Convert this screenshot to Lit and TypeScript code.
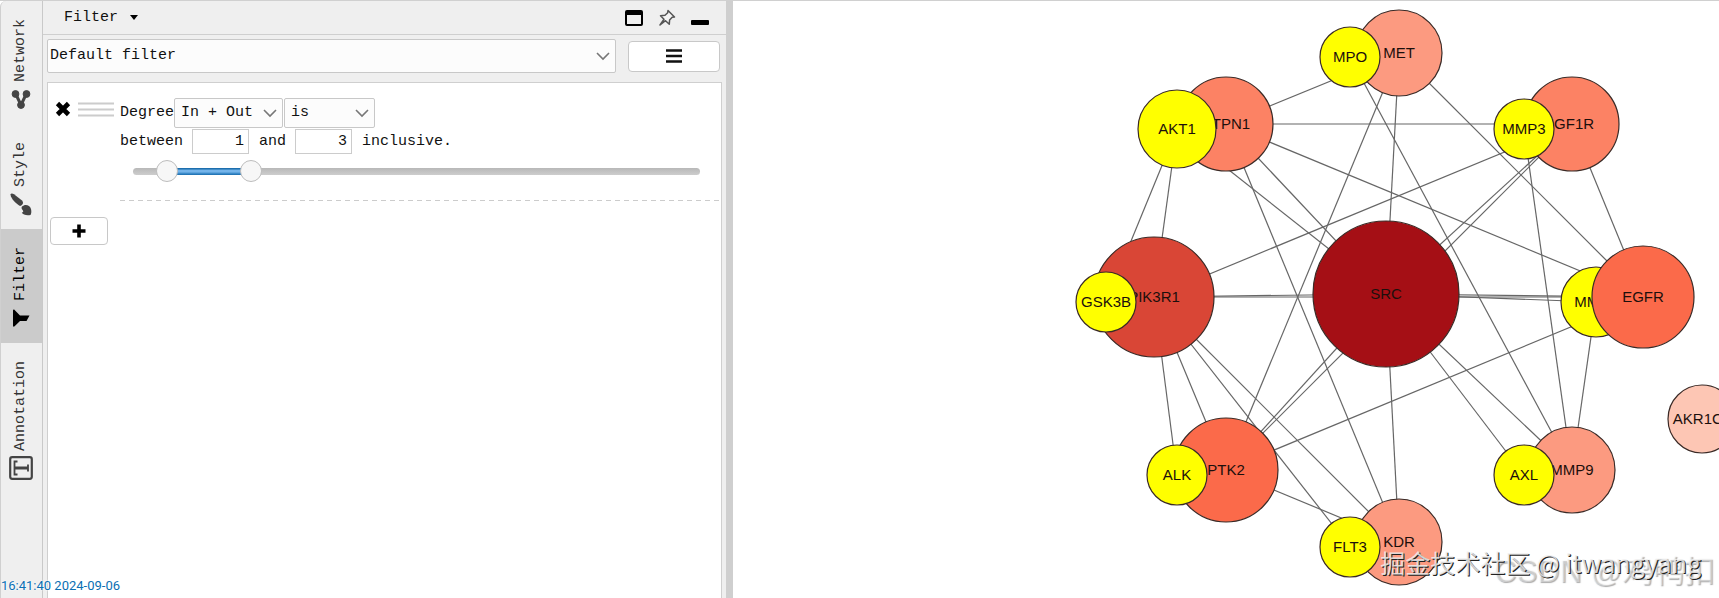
import { LitElement, html, svg, css } from "lit";
import { customElement, state } from "lit/decorators.js";
import { classMap } from "lit/directives/class-map.js";

interface GraphNode {
  id: string;
  x: number;
  y: number;
  r: number;
  fill: string;
}

const YELLOW = "#ffff00";

// Painted in array order, so later nodes cover earlier ones.
const NODES: GraphNode[] = [
  { id: "MET", x: 1399, y: 53, r: 43, fill: "#fc9a80" },
  { id: "MPO", x: 1350, y: 57, r: 30, fill: YELLOW },
  { id: "PTPN1", x: 1226, y: 124, r: 47, fill: "#fc8264" },
  { id: "AKT1", x: 1177, y: 129, r: 39, fill: YELLOW },
  { id: "IGF1R", x: 1572, y: 124, r: 47, fill: "#fc8264" },
  { id: "MMP3", x: 1524, y: 129, r: 30, fill: YELLOW },
  { id: "PIK3R1", x: 1154, y: 297, r: 60, fill: "#d94636" },
  { id: "GSK3B", x: 1106, y: 302, r: 30, fill: YELLOW },
  { id: "SRC", x: 1386, y: 294, r: 73, fill: "#a50f15" },
  { id: "MMP2", x: 1596, y: 302, r: 35, fill: YELLOW },
  { id: "EGFR", x: 1643, y: 297, r: 51, fill: "#fb6a4a" },
  { id: "PTK2", x: 1226, y: 470, r: 52, fill: "#fb6a4a" },
  { id: "ALK", x: 1177, y: 475, r: 30, fill: YELLOW },
  { id: "MMP9", x: 1572, y: 470, r: 43, fill: "#fc9a80" },
  { id: "AXL", x: 1524, y: 475, r: 30, fill: YELLOW },
  { id: "KDR", x: 1399, y: 542, r: 43, fill: "#fc9a80" },
  { id: "FLT3", x: 1350, y: 547, r: 30, fill: YELLOW },
  { id: "AKR1C3", x: 1702, y: 419, r: 34, fill: "#fdc6b4" },
];

const EDGES: [string, string][] = [
  ["PTPN1", "MET"], ["PTPN1", "IGF1R"], ["PTPN1", "SRC"], ["PTPN1", "KDR"], ["PTPN1", "EGFR"],
  ["AKT1", "PIK3R1"], ["AKT1", "GSK3B"], ["AKT1", "SRC"],
  ["MET", "SRC"], ["MET", "PTK2"], ["MET", "EGFR"], ["MPO", "MMP9"],
  ["IGF1R", "PIK3R1"], ["IGF1R", "SRC"], ["IGF1R", "PTK2"], ["IGF1R", "EGFR"],
  ["MMP3", "MMP9"], ["MMP2", "MMP9"],
  ["PIK3R1", "EGFR"], ["PIK3R1", "SRC"], ["PIK3R1", "ALK"], ["PIK3R1", "PTK2"],
  ["PIK3R1", "FLT3"], ["PIK3R1", "KDR"],
  ["PTK2", "SRC"], ["PTK2", "KDR"], ["PTK2", "EGFR"],
  ["SRC", "EGFR"], ["SRC", "MMP2"], ["SRC", "KDR"], ["SRC", "AXL"], ["SRC", "MMP9"],
];

@customElement("network-view")
export class NetworkView extends LitElement {
  static styles = css`
    :host { display: block; min-width: 0; background: #fff; overflow: hidden; }
    .graph { display: block; width: 100%; height: 100%; }
    .edge { stroke: #666; stroke-width: 1.2; }
    .node { stroke: #3a2a26; stroke-width: 1.2; }
    .name {
      font: 15px "Liberation Sans", Arial, sans-serif;
      fill: #1c0f0c;
      text-anchor: middle;
    }
  `;

  render() {
    const at = new Map(NODES.map((n) => [n.id, n]));
    return html`
      <svg class="graph" viewBox="733 1 986 597" preserveAspectRatio="xMaxYMid meet" role="img" aria-label="Protein interaction network">
        ${EDGES.map(([a, b]) => {
          const p = at.get(a)!;
          const q = at.get(b)!;
          return svg`<line class="edge" x1=${p.x} y1=${p.y} x2=${q.x} y2=${q.y}></line>`;
        })}
        ${NODES.map((n) => svg`
          <g>
            <circle class="node" cx=${n.x} cy=${n.y} r=${n.r} fill=${n.fill}></circle>
            <text class="name" x=${n.x} y=${n.y + 5}>${n.id}</text>
          </g>`)}
      </svg>
    `;
  }
}

const ICONS: Record<string, unknown> = {
  Network: svg`<g fill="#444" stroke="#444"><path d="M7 7.500 12 18 17 7.500" fill="none" stroke-width="3"/><circle cx="6.500" cy="7" r="3.400"/><circle cx="17.500" cy="7" r="3.400"/><circle cx="12" cy="18" r="3.400"/></g>`,
  Style: svg`<g fill="#444"><path d="M1.500 2.500C1.800 1.200 3.500 1.200 5 2.300L13 8.500C14.500 10 14.500 12 12.300 13.600L11 14C7 11.500 2 7 1.500 2.500Z"/><path d="M13 14.500C16 11.500 21 13 22 17C22.700 20 22.200 22 21.500 23C18 23.800 13.800 23 12.800 20.500C14.500 20.500 14.800 19.500 13.200 17.500C12.500 16.500 12.300 15.300 13 14.500Z"/></g>`,
  Filter: svg`<path d="M4 4.500C4 3.500 5 3.300 5.600 4L11 9.500H20.500L17.500 15H11L5.600 20.300C5 21 4 20.700 4 19.700Z" fill="#000"/>`,
  Annotation: svg`<g fill="none" stroke="#444"><rect x="1.200" y="1.200" width="21.600" height="21.600" rx="2" stroke-width="2.200"/><path d="M5.500 12H19" stroke-width="3"/><path d="M8.500 5.500H5.500V18.500H8.500M19 8.500V15.500" stroke-width="1.800"/></g>`,
};

@customElement("filter-panel")
export class FilterPanel extends LitElement {
  @state() private low = 1;
  @state() private high = 3;
  private readonly min = 0.2;
  private readonly max = 13.7;

  static styles = css`
    :host {
      display: flex;
      flex-direction: column;
      min-width: 0;
      padding: 0 4px;
      background: #efefef;
      border-left: 1px solid #c9c9c9;
      font: 15px/18px "Liberation Mono", "Courier New", monospace;
      color: #111;
    }
    * { box-sizing: border-box; }
    button, select, input { font: inherit; color: inherit; margin: 0; }
    svg { display: block; }
    .head {
      display: flex;
      align-items: center;
      justify-content: space-between;
      height: 34px;
      margin: 0 -4px;
      padding: 0 17px 0 21px;
      border-bottom: 1px solid #cfcfcf;
    }
    .title, .tool { display: flex; align-items: center; border: 0; padding: 0; background: none; }
    .title { gap: 12px; }
    .tools { display: flex; align-items: center; gap: 15px; }
    .bar { display: flex; align-items: center; gap: 12px; padding: 4px 2px 9px 0; }
    .pick { display: grid; align-items: center; }
    .pick select, .pick svg { grid-area: 1 / 1; }
    .pick svg { justify-self: end; margin-right: 5px; pointer-events: none; }
    .pick select {
      appearance: none;
      width: 100%;
      height: 30px;
      padding: 0 6px;
      border: 1px solid #c8c8c8;
      border-radius: 2px;
      background: #fcfcfc;
    }
    .wide { flex: 1; }
    .wide select { height: 34px; padding: 0 2px; }
    .btn {
      display: grid;
      place-items: center;
      padding: 0;
      border: 1px solid #c8c8c8;
      border-radius: 4px;
      background: #fff;
    }
    .menu { width: 92px; height: 31px; }
    .add { width: 58px; height: 28px; margin: 16px 0 0 2px; }
    .list {
      flex: 1;
      border: 1px solid #cfcfcf;
      border-bottom: 0;
      background: #fff;
    }
    .rule { display: flex; align-items: flex-start; padding-top: 15px; }
    .lead { display: flex; align-items: center; gap: 7px; width: 72px; padding: 3px 0 0 7px; }
    .grip { width: 36px; height: 15px; }
    .close { padding: 0; border: 0; background: none; }
    .body {
      flex: 1;
      min-width: 0;
      padding-bottom: 19px;
      background: repeating-linear-gradient(90deg, #ccc 0 5px, transparent 5px 9px) bottom / 100% 1px no-repeat;
    }
    .line { display: flex; align-items: center; }
    .line + .line { margin-top: 1px; }
    .way { width: 109px; }
    .test { width: 91px; margin-left: 1px; }
    .num {
      width: 57px;
      height: 25px;
      margin: 0 10px 0 9px;
      padding: 0 4px;
      border: 1px solid #ccc;
      background: #fff;
      text-align: right;
    }
    .slider { display: grid; align-items: center; height: 22px; margin: 6px 10px 0 2px; }
    .slider > * { grid-area: 1 / 1; min-width: 0; }
    .track { height: 7px; margin: 0 11px; border-radius: 4px; background: linear-gradient(#b8b8b8, #cdcdcd); }
    .span { height: 7px; background: linear-gradient(#1d6fae 0 15%, #74b4ea 30% 55%, #2c7fc0 85%, #1d6fae); }
    .range { appearance: none; width: 100%; height: 22px; margin: 0; background: none; pointer-events: none; }
    .range::-webkit-slider-thumb {
      appearance: none;
      width: 22px;
      height: 22px;
      border: 1px solid #bdbdbd;
      border-radius: 50%;
      background: #f7f7f7;
      pointer-events: auto;
    }
  `;

  private chevron() {
    return html`<svg width="16" height="10" viewBox="0 0 16 10"><path d="M2 2 8 8 14 2" fill="none" stroke="#777" stroke-width="1.600"/></svg>`;
  }

  private setLow(e: Event) {
    this.low = Math.min(Math.round(Number((e.target as HTMLInputElement).value)), this.high);
  }

  private setHigh(e: Event) {
    this.high = Math.max(Math.round(Number((e.target as HTMLInputElement).value)), this.low);
  }

  render() {
    const pct = (v: number) => ((v - this.min) / (this.max - this.min)) * 100;
    return html`
      <div class="head">
        <button class="title">Filter
          <svg width="8" height="5" viewBox="0 0 8 5"><path d="M0 0H8L4 5Z"/></svg>
        </button>
        <div class="tools">
          <button class="tool" aria-label="Float">
            <svg width="18" height="16" viewBox="0 0 18 16"><rect x="1" y="1" width="16" height="14" rx="1" fill="none" stroke="#000" stroke-width="2"/><path d="M1 1H17V5H1Z"/></svg>
          </button>
          <button class="tool" aria-label="Pin">
            <svg width="18" height="18" viewBox="0 0 18 18"><path d="M10 1.500 16.500 8 14.200 8.300 11.600 11 11.300 15.300 7.500 11.700 2 16 6 10.200 2.500 6.700 7 6.300 9.700 3.700Z" fill="#f4f4f4" stroke="#555" stroke-width="1.500" stroke-linejoin="round"/></svg>
          </button>
          <button class="tool" aria-label="Minimize">
            <svg width="18" height="16" viewBox="0 0 18 16"><rect x="0" y="10" width="18" height="5" rx="1"/></svg>
          </button>
        </div>
      </div>
      <div class="bar">
        <div class="pick wide">
          <select aria-label="Filter set"><option>Default filter</option></select>
          ${this.chevron()}
        </div>
        <button class="btn menu" aria-label="Options">
          <svg width="16" height="14" viewBox="0 0 16 14"><path d="M0 1.500H16M0 7H16M0 12.500H16" stroke="#111" stroke-width="2.600"/></svg>
        </button>
      </div>
      <div class="list">
        <div class="rule">
          <div class="lead">
            <button class="close" aria-label="Remove condition">
              <svg width="16" height="16" viewBox="0 0 16 16"><path d="M2.500 2.500 13.500 13.500M13.500 2.500 2.500 13.500" stroke="#000" stroke-width="4.600"/></svg>
            </button>
            <svg class="grip" viewBox="0 0 36 15"><path d="M0 1.500H36M0 7.500H36M0 13.500H36" stroke="#ccc" stroke-width="2"/></svg>
          </div>
          <div class="body">
            <div class="line">
              <span>Degree</span>
              <div class="pick way">
                <select aria-label="Edge direction"><option>In + Out</option></select>
                ${this.chevron()}
              </div>
              <div class="pick test">
                <select aria-label="Comparison"><option>is</option></select>
                ${this.chevron()}
              </div>
            </div>
            <div class="line">
              <label for="low">between</label>
              <input id="low" class="num" .value=${String(this.low)} @change=${this.setLow} />
              <label for="high">and</label>
              <input id="high" class="num" .value=${String(this.high)} @change=${this.setHigh} />
              <span>inclusive.</span>
            </div>
            <div class="slider">
              <div class="track">
                <div class="span" style="margin-left:${pct(this.low)}%;width:${pct(this.high) - pct(this.low)}%"></div>
              </div>
              <input class="range" type="range" aria-label="Lowest degree" step="any" min=${this.min} max=${this.max} .value=${String(this.low)} @input=${this.setLow} />
              <input class="range" type="range" aria-label="Highest degree" step="any" min=${this.min} max=${this.max} .value=${String(this.high)} @input=${this.setHigh} />
            </div>
          </div>
        </div>
        <button class="btn add" aria-label="Add condition">
          <svg width="14" height="14" viewBox="0 0 14 14"><path d="M7 0.500V13.500M0.500 7H13.500" stroke="#000" stroke-width="3.600"/></svg>
        </button>
      </div>
    `;
  }
}

@customElement("app-root")
export class AppRoot extends LitElement {
  @state() private active = "Filter";

  static styles = css`
    :host {
      position: relative;
      display: grid;
      grid-template-columns: minmax(0, 733fr) minmax(0, 986fr);
      height: 100vh;
      overflow: hidden;
      box-sizing: border-box;
      border-top: 1px solid #d0d0d0;
      background: #fff;
    }
    .dock {
      display: grid;
      grid-template-columns: 42px minmax(0, 1fr);
      min-height: 0;
      border-right: 7px solid #cfcfcf;
      border-top-left-radius: 6px;
      background: #efefef;
    }
    .tabs { display: flex; flex-direction: column; border-left: 1px solid #d0d0d0; border-top-left-radius: 6px; }
    .tab {
      display: flex;
      flex-direction: column;
      align-items: center;
      gap: 5px;
      padding: 18px 2px 13px 0;
      border: 0;
      background: none;
      font: 15px/18px "Liberation Mono", "Courier New", monospace;
      color: #333;
    }
    .on { background: #cbcbcb; color: #000; }
    .label { writing-mode: vertical-rl; transform: rotate(180deg); }
    .icon { display: block; width: 24px; height: 24px; }
    .stamp {
      position: absolute;
      left: 1px;
      bottom: 4px;
      font: 13px/16px Roboto, sans-serif;
      color: #0b6fb3;
      text-shadow: 0 0 2px #fff, 0 0 2px #fff;
    }
    .mark, .ghost {
      position: absolute;
      white-space: nowrap;
      line-height: 40px;
    }
    .ghost {
      right: 4px;
      bottom: 6px;
      font-family: "Liberation Sans", "Noto Sans CJK SC", sans-serif;
      font-size: 31px;
      color: rgba(255, 255, 255, 0.4);
      text-shadow: 1px 1px 1px rgba(90, 90, 90, 0.5);
    }
    .mark {
      right: 18px;
      bottom: 16px;
      font-family: "Noto Sans CJK SC", sans-serif;
      font-size: 25px;
      color: rgba(240, 240, 240, 0.85);
      text-shadow: 1px 1px 0 #222;
    }
  `;

  render() {
    return html`
      <div class="dock">
        <nav class="tabs">
          ${Object.keys(ICONS).map((name) => html`
            <button class=${classMap({ tab: true, on: name === this.active })} @click=${() => (this.active = name)}>
              <span class="label">${name}</span>
              <svg class="icon" viewBox="0 0 24 24">${ICONS[name]}</svg>
            </button>`)}
        </nav>
        <filter-panel></filter-panel>
      </div>
      <network-view></network-view>
      <div class="stamp">16:41:40 2024-09-06</div>
      <div class="ghost">CSDN @鸡鸭扣</div>
      <div class="mark">掘金技术社区 @ itwangyang</div>
    `;
  }
}
